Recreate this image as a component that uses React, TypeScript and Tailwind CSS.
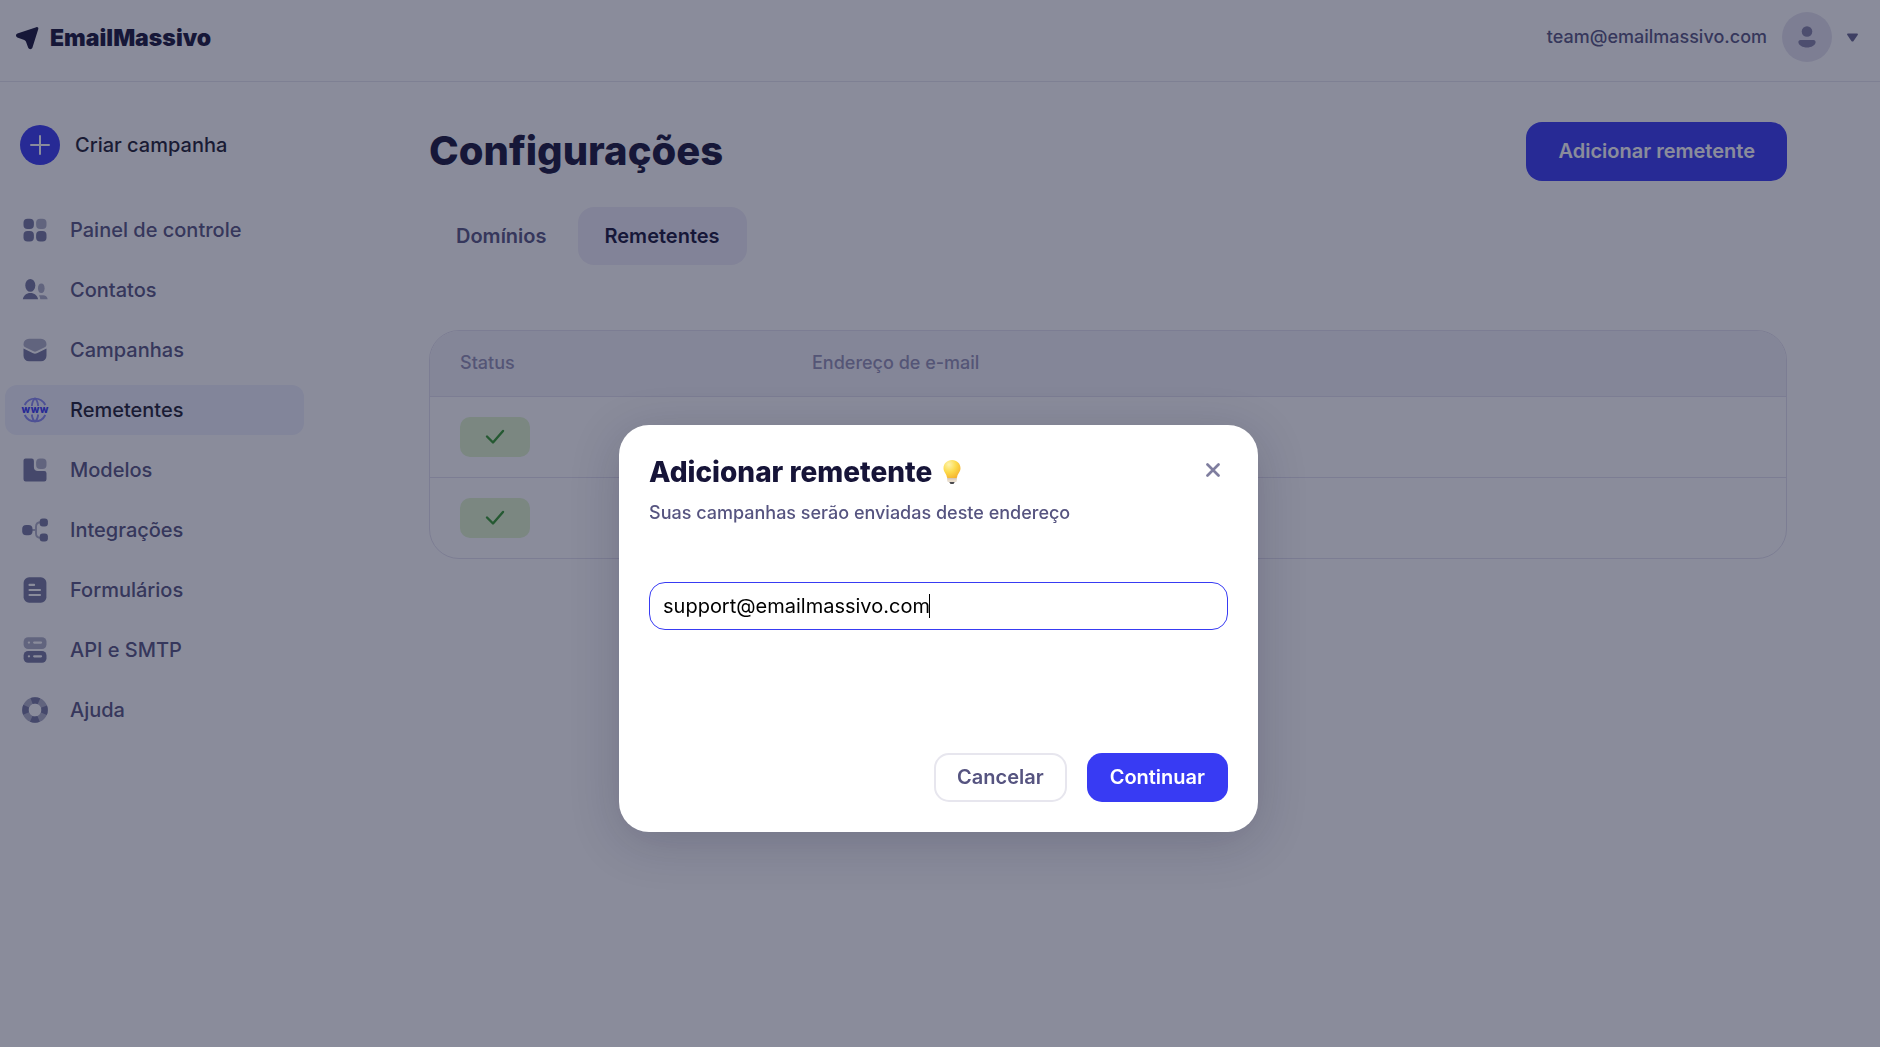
// App.tsx: sender settings page with the "add sender" dialog open

import { useState, type ReactNode } from "react";

const DARK = "#74779f";
const LIGHT = "#adaec5";

// ── Sidebar icons (28x28) ─────────────────────────────────────────────────────
const ICONS: Record<string, ReactNode> = {
  dashboard: (
    <>
      <rect x="2.5" y="2.7" width="10.4" height="10.4" rx="4" fill={DARK} />
      <rect x="15.1" y="2.7" width="10.4" height="10.4" rx="4" fill={LIGHT} />
      <rect x="2.5" y="15" width="10.4" height="10.4" rx="4" fill={DARK} />
      <rect x="15.1" y="15" width="10.4" height="10.4" rx="4" fill={DARK} />
    </>
  ),
  contacts: (
    <>
      <ellipse cx="9.3" cy="9.4" rx="5" ry="6.4" fill={DARK} />
      <path d="M1.8 23.2c.6-3.6 3.6-6.2 7.6-6.2s7 2.6 7.7 6.2z" fill={DARK} />
      <ellipse cx="20.3" cy="12.3" rx="3.3" ry="4.8" fill={LIGHT} />
      <path d="M18 19.2h4.2c2.4 0 4 1.6 4.5 4h-7.4c-.2-1.5-.6-2.8-1.3-4z" fill={LIGHT} />
    </>
  ),
  campaigns: (
    <>
      <path d="M2.5 8.2a5.5 5.5 0 0 1 5.5-5.5h12a5.5 5.5 0 0 1 5.5 5.5c0 1.6-.6 2.5-1.8 3.1l-8.2 4a3.5 3.5 0 0 1-3 0l-8.2-4c-1.2-.6-1.8-1.5-1.8-3.1z" fill={LIGHT} />
      <path d="M2.5 12.5l9.6 4.8a4.2 4.2 0 0 0 3.8 0l9.6-4.8v7.3a5.5 5.5 0 0 1-5.5 5.5h-12a5.5 5.5 0 0 1-5.5-5.5z" fill={DARK} />
    </>
  ),
  senders: (
    <>
      <g fill="none" stroke="#8789f2" strokeWidth="1.9">
        <path d="M3.7 9a11.500 11.500 0 0 1 20.600 0M3.700 19a11.500 11.500 0 0 0 20.600 0" />
        <path d="M10.800 10c.4-3.200 1.600-6.500 3.200-7.500 1.600 1 2.800 4.300 3.200 7.500M10.800 18.500c.4 3 1.600 6 3.200 7 1.600-1 2.800-4 3.200-7" />
      </g>
      <text x="4.9 14 23.1" y="16.700" textAnchor="middle" fill="#383bf3" className="font-['Inter',sans-serif] text-[10px] font-extrabold">
        www
      </text>
    </>
  ),
  templates: (
    <>
      <path d="M4.5 2.5h6.200a2.200 2.200 0 0 1 2.200 2.200v6.300a4 4 0 0 0 4 4h6.400a2.200 2.200 0 0 1 2.200 2.200v6a2.200 2.200 0 0 1-2.200 2.200H4.700a2.200 2.200 0 0 1-2.200-2.200V4.500a2 2 0 0 1 2-2z" fill={DARK} />
      <rect x="15.1" y="2.5" width="10.4" height="10.4" rx="4" fill={LIGHT} />
    </>
  ),
  integrations: (
    <>
      <path d="M11 14h4M20 6.200c-3.600 0-5 1.400-5 4.300v7c0 2.900 1.400 4.300 5 4.300" fill="none" stroke={LIGHT} strokeWidth="1.9" />
      <rect x="1.2" y="8.9" width="10.3" height="10.3" rx="4" fill={DARK} />
      <rect x="18.7" y="2.4" width="8.2" height="8" rx="3" fill={DARK} />
      <rect x="18.7" y="17.4" width="8.2" height="8" rx="3" fill={DARK} />
    </>
  ),
  forms: (
    <>
      <rect x="2.6" y="1.3" width="22.8" height="25.4" rx="5.5" fill={DARK} />
      <path d="M8.500 8.900h4.600M8.500 14h10.500M8.500 19h10.500" stroke="#fff" strokeWidth="2.1" strokeLinecap="round" />
    </>
  ),
  api: (
    <>
      <rect x="2.6" y="1.2" width="22.9" height="11.8" rx="4.5" fill={LIGHT} />
      <rect x="2.6" y="15" width="22.9" height="11.8" rx="4.5" fill={DARK} />
      <path d="M13.200 6.600h6.800M13.200 20.300h6.800M7.900 6.600h.1M7.900 20.300h.1" stroke="#fff" strokeWidth="2.3" strokeLinecap="round" />
    </>
  ),
  help: (
    <>
      <circle cx="14" cy="14" r="9.6" fill="none" stroke={LIGHT} strokeWidth="6.4" />
      <circle cx="14" cy="14" r="9.6" fill="none" stroke={DARK} strokeWidth="6.4" strokeDasharray="7.54 7.54" strokeDashoffset="3.77" />
    </>
  ),
};

const NAV = [
  { icon: "dashboard", label: "Painel de controle" },
  { icon: "contacts", label: "Contatos" },
  { icon: "campaigns", label: "Campanhas" },
  { icon: "senders", label: "Remetentes", active: true },
  { icon: "templates", label: "Modelos" },
  { icon: "integrations", label: "Integrações" },
  { icon: "forms", label: "Formulários" },
  { icon: "api", label: "API e SMTP" },
  { icon: "help", label: "Ajuda" },
];

const SENDERS = [{ id: 1 }, { id: 2 }];

function Header() {
  return (
    <header className="flex h-[82px] items-start justify-between border-b border-[#e6e6ee] pl-3.5 pr-[22px] pt-3">
      <a href="#" className="flex h-[53px] items-center gap-[11px] text-[23px] font-black">
        <svg width="25" height="25" viewBox="0 0 25 25" fill="currentColor" aria-hidden="true">
          <path d="M22.300 1.200c1.300-.4 2.400.6 2 1.900l-5.900 18.700c-.6 1.900-3.500 1.900-4.200 0l-2.300-6.200c-.3-.8-.8-1.400-1.600-1.700L3.300 11.400c-1.800-.7-1.800-3.200.1-3.900z" />
        </svg>
        EmailMassivo
      </a>
      <button type="button" className="flex h-[50px] items-center gap-[15px] text-lg font-medium text-[#565480]">
        team@emailmassivo.com
        <span className="flex size-[50px] items-center justify-center rounded-full bg-[#e5e3ef]">
          <svg width="24" height="24" viewBox="0 0 24 24" fill="#8482a6" aria-hidden="true">
            <circle cx="12" cy="6.5" r="5.3" />
            <path d="M5.500 15h13c1.400 0 2.300 1.100 2.100 2.400-.4 2.700-4.200 5-8.600 5s-8.200-2.300-8.600-5c-.2-1.300.7-2.400 2.100-2.400z" />
          </svg>
        </span>
        <svg width="11" height="9" viewBox="0 0 11 9" fill="#67658e" aria-hidden="true">
          <path d="M1.200.5h8.600c1 0 1.400.8.900 1.600L6.600 8c-.6.800-1.600.8-2.200 0L.3 2.100C-.2 1.300.2.5 1.200.5z" />
        </svg>
      </button>
    </header>
  );
}

function Sidebar() {
  return (
    <aside className="w-[308px] shrink-0 pl-[5px] pr-1 pt-[43px]">
      <button type="button" className="ml-[15px] flex items-center gap-[15px] text-xl font-medium text-[#1d1c30]">
        <span className="flex size-10 items-center justify-center rounded-full bg-[#383bf3]">
          <svg width="20" height="20" viewBox="0 0 20 20" stroke="#fff" strokeWidth="2" strokeLinecap="round" aria-hidden="true">
            <path d="M10 1v18M1 10h18" />
          </svg>
        </span>
        Criar campanha
      </button>

      <nav className="mt-10 flex flex-col gap-2.5">
        {NAV.map(item => (
          <a
            key={item.icon}
            href="#"
            className={`flex h-[50px] items-center gap-[21px] rounded-xl pl-4 text-xl font-medium ${
              item.active ? "bg-[#eff1fd] text-[#1d1c30]" : "text-[#565480]"
            }`}
          >
            <svg width="28" height="28" viewBox="0 0 28 28" aria-hidden="true">
              {ICONS[item.icon]}
            </svg>
            {item.label}
          </a>
        ))}
      </nav>
    </aside>
  );
}

function SendersTable() {
  return (
    <div className="mt-[65px] overflow-hidden rounded-[30px] border border-[#e3e1ee]">
      <table className="w-full table-fixed text-left text-lg">
        <thead className="bg-[#f3f2f9] text-[#9391b4]">
          <tr className="h-[65px]">
            <th className="w-[352px] pl-[30px] font-medium">Status</th>
            <th className="pl-[30px] font-medium">Endereço de e-mail</th>
          </tr>
        </thead>
        <tbody>
          {SENDERS.map(sender => (
            <tr key={sender.id} className="h-[81px] border-t border-[#e3e1ee]">
              <td className="pl-[30px]">
                <span className="flex h-10 w-[70px] items-center justify-center rounded-[10px] bg-[#e0f4cb]">
                  <svg width="20" height="16" viewBox="0 0 20 16" fill="none" stroke="#34992c" strokeWidth="2.4" strokeLinecap="round" strokeLinejoin="round" aria-label="Verificado">
                    <path d="M2 7.500l6 6L18 2" />
                  </svg>
                </span>
              </td>
              <td />
            </tr>
          ))}
        </tbody>
      </table>
    </div>
  );
}

function Bulb() {
  return (
    <svg width="20" height="26" viewBox="0 0 20 26" aria-hidden="true">
      <defs>
        <radialGradient id="bulb" cx=".32" cy=".25" r=".85">
          <stop offset="0" stopColor="#fdf3ad" />
          <stop offset=".5" stopColor="#fcdb4c" />
          <stop offset="1" stopColor="#f5b02c" />
        </radialGradient>
      </defs>
      <path d="M7 22.500h6L11.500 25h-3z" fill="#4a4a4e" />
      <path d="M5.200 17.500h9.600v4a1.500 1.500 0 0 1-1.500 1.500H6.700a1.500 1.500 0 0 1-1.500-1.500z" fill="#e8dccb" />
      <path d="M5.200 19.800h9.600" stroke="#c9b8a4" strokeWidth=".8" />
      <path d="M10 1c5 0 8.500 3.600 8.500 8.300 0 3.900-2.900 5.200-3.400 8.900-.1.500-.4.800-.9.800H5.800c-.5 0-.8-.3-.9-.8-.5-3.700-3.400-5-3.400-8.900C1.500 4.600 5 1 10 1z" fill="url(#bulb)" />
    </svg>
  );
}

function AddSenderDialog() {
  const [email, setEmail] = useState("support@emailmassivo.com");

  return (
    <div className="fixed inset-0 flex items-start justify-center bg-[#161a38]/50 pl-4 pr-[19px] pt-[425px]">
      <div
        role="dialog"
        aria-modal="true"
        aria-labelledby="dialog-title"
        className="w-full max-w-[639px] rounded-[30px] bg-white p-[30px] shadow-[0_10px_50px_rgba(22,20,56,0.2)]"
      >
        <div className="flex items-start justify-between">
          <h2 id="dialog-title" className="flex items-center gap-2.5 text-[28px] leading-[34px] font-extrabold">
            Adicionar remetente
            <Bulb />
          </h2>
          <button type="button" aria-label="Fechar" className="flex size-[30px] items-center justify-center">
            <svg width="14" height="14" viewBox="0 0 14 14" stroke="#7f7e9f" strokeWidth="2.7" strokeLinecap="round" aria-hidden="true">
              <path d="M1.500 1.500l11 11M12.500 1.500l-11 11" />
            </svg>
          </button>
        </div>
        <p id="dialog-hint" className="mt-2.5 text-lg font-medium text-[#565480]">
          Suas campanhas serão enviadas deste endereço
        </p>

        <div className="relative mt-[55px]">
          <input
            type="email"
            aria-label="Endereço de e-mail"
            aria-describedby="dialog-hint"
            value={email}
            onChange={e => setEmail(e.target.value)}
            className="h-12 w-full rounded-2xl border border-[#383bf3] px-[13px] text-xl text-black caret-transparent outline-none"
          />
          {/* Text cursor */}
          <span className="absolute left-[280px] top-3 h-6 w-px bg-black" />
        </div>

        <div className="mt-[123px] flex justify-end gap-5 text-xl font-semibold">
          <button type="button" className="h-[49px] rounded-[15px] border-2 border-[#e7e6ee] px-[21px] pb-0.5 text-[#565480]">
            Cancelar
          </button>
          <button type="button" className="h-[49px] rounded-[15px] bg-[#383bf3] px-[23px] pb-0.5 text-white">
            Continuar
          </button>
        </div>
      </div>
    </div>
  );
}

export default function App() {
  return (
    <div className="min-h-screen bg-white font-['Inter',sans-serif] text-[#161438]">
      <Header />
      <div className="flex">
        <Sidebar />
        <main className="min-w-0 flex-1 pl-[121px] pr-[93px] pt-10">
          <div className="flex items-center justify-between">
            <h1 className="pb-0.5 text-[40px] leading-[48px] font-extrabold">Configurações</h1>
            <button type="button" className="h-[59px] rounded-2xl bg-[#383bf3] px-8 pb-0.5 text-xl font-semibold text-white">
              Adicionar remetente
            </button>
          </div>

          <div className="mt-[26px] flex gap-1 text-xl font-semibold">
            <button type="button" className="h-[58px] rounded-2xl px-[27px] text-[#565480]">
              Domínios
            </button>
            <button type="button" className="h-[58px] rounded-2xl bg-[#efedf8] px-[27px]">
              Remetentes
            </button>
          </div>

          <SendersTable />
        </main>
      </div>
      <AddSenderDialog />
    </div>
  );
}
